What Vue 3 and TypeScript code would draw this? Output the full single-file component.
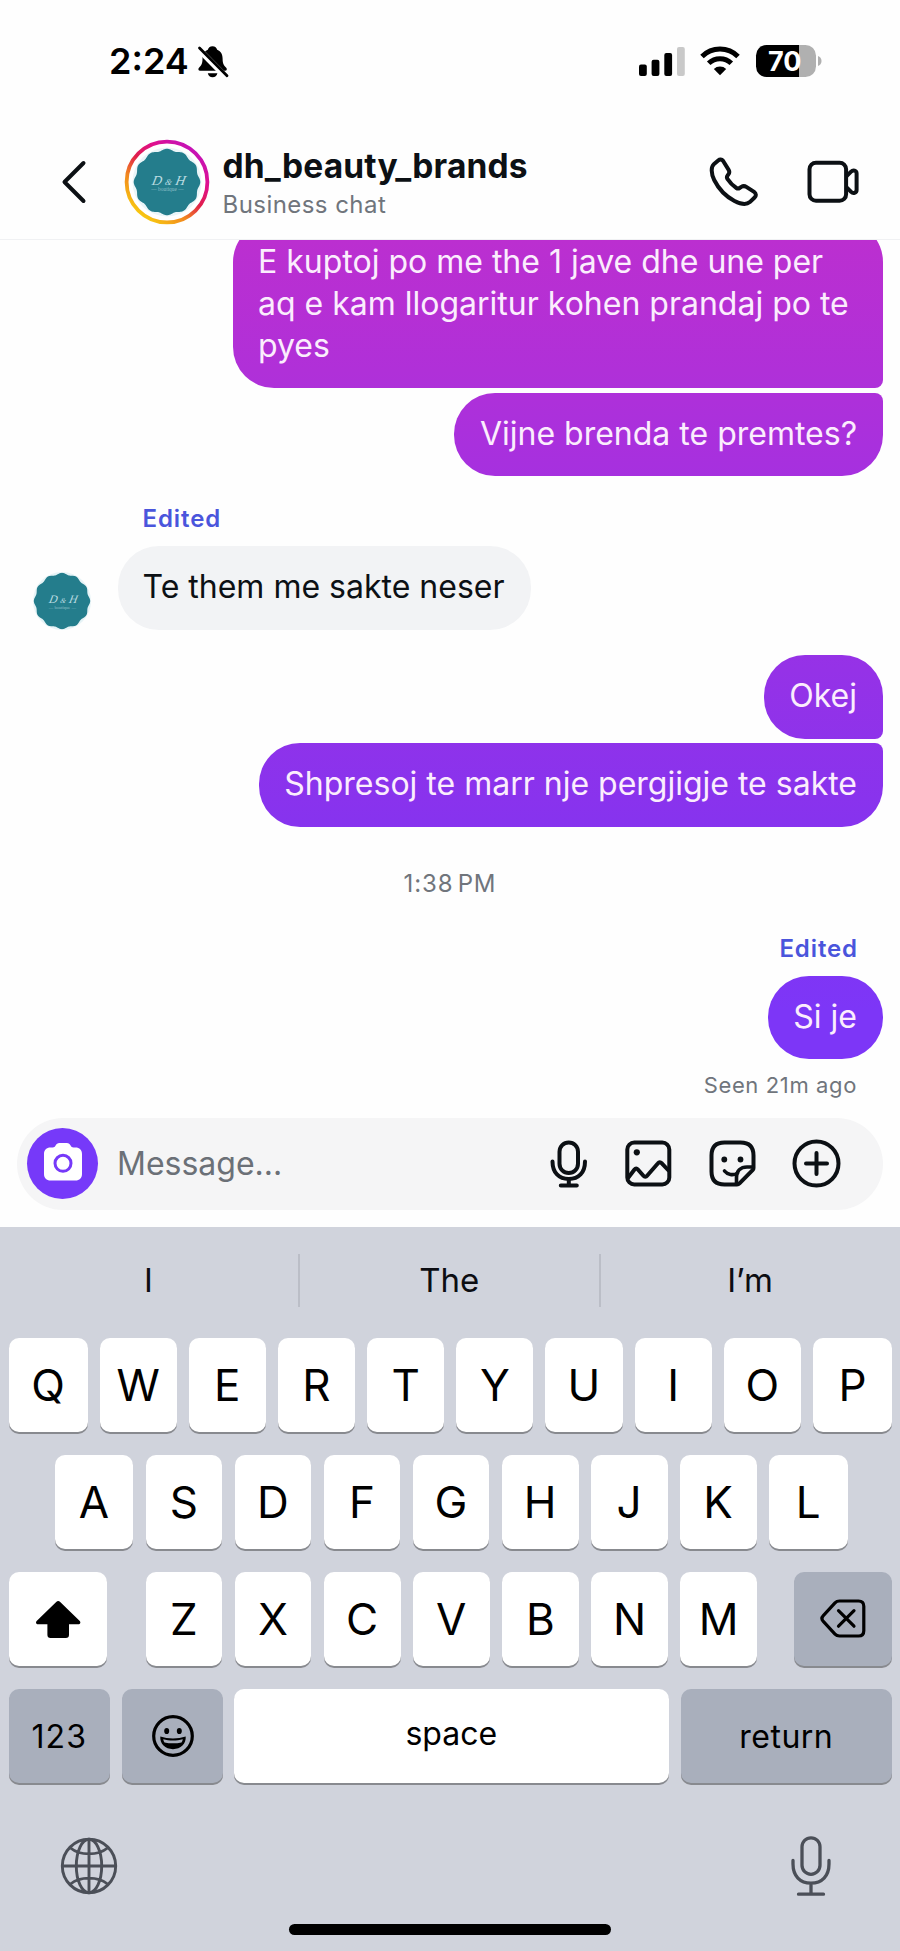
<script setup lang="ts">
interface Key {
  label: string
}

const toKeys = (letters: string): Key[] => [...letters].map((label) => ({ label }))

const topRow = toKeys('QWERTYUIOP')
const homeRow = toKeys('ASDFGHJKL')
const bottomRow = toKeys('ZXCVBNM')
const suggestions: string[] = ['I', 'The', 'I’m']

// Outline of the twelve-lobed seal used as the brand's avatar.
function sealPath(center: number, radius: number, depth: number, lobes: number): string {
  const points: string[] = []
  const steps = 240
  for (let i = 0; i < steps; i++) {
    const angle = (i / steps) * Math.PI * 2
    const r = radius - depth * (0.5 - 0.5 * Math.cos(lobes * angle))
    points.push(`${(center + r * Math.cos(angle)).toFixed(2)} ${(center + r * Math.sin(angle)).toFixed(2)}`)
  }
  return `M${points.join('L')}Z`
}

const seal = sealPath(35, 34, 2, 12)
</script>

<template>
  <div class="phone">
    <div class="status">
      <span class="clock">2:24</span>
      <svg class="bell" width="32" height="34" viewBox="0 0 32 34">
        <path d="M15.500 1.200c-2.600 0-4.200 1.600-4.700 3.500-3.900 1.500-5.300 4.800-5.300 8.800 0 5.500-1.300 7-3.300 9-1.400 1.400-1 3.300 1 3.300h24.800c2 0 2.400-1.900 1-3.300-2-2-3.400-3.500-3.400-9 0-4-1.400-7.300-5.400-8.800-.5-1.900-2.100-3.500-4.700-3.500z" />
        <path d="M10.800 28.200h9.600c-.6 2.600-2.300 4.100-4.800 4.100s-4.200-1.500-4.800-4.100z" />
        <path d="M0 2.500L30 33" stroke="#fff" stroke-width="6" />
        <path d="M2.500 3L30 30.800" stroke="#000" stroke-width="2.800" stroke-linecap="round" />
      </svg>
      <svg class="signal" width="46" height="29" viewBox="0 0 46 29">
        <rect x="0" y="17.500" width="7.800" height="11.500" rx="2" />
        <rect x="12.600" y="12.700" width="7.800" height="16.300" rx="2" />
        <rect x="25.300" y="6" width="7.800" height="23" rx="2" />
        <rect x="38" y="0" width="7.800" height="29" rx="2" fill="#c9c9c9" />
      </svg>
      <svg class="wifi" width="40" height="30" viewBox="0 0 40 30">
        <g fill="none" stroke="#000" stroke-width="5">
          <path d="M2 10.400a25.500 25.500 0 0 1 36 0" />
          <path d="M8.700 17.300a16 16 0 0 1 22.600 0" />
        </g>
        <path d="M20 29.200l-6.200-6.300a9 9 0 0 1 12.400 0z" />
      </svg>
      <div class="battery">
        <div class="cell"><span>70</span></div>
        <svg width="4" height="10" viewBox="0 0 4 10"><path d="M0 0c2 .6 3.500 2.600 3.500 5s-1.500 4.400-3.500 5z" fill="#b0b0b0" /></svg>
      </div>
    </div>

    <header class="header">
      <svg class="back" width="26" height="44" viewBox="0 0 26 44">
        <path d="M22.500 3L3.500 22l19 19" fill="none" stroke="#0c1014" stroke-width="4" stroke-linecap="round" stroke-linejoin="round" />
      </svg>
      <svg class="story" width="86" height="86" viewBox="0 0 86 86">
        <defs>
          <linearGradient id="ring" x1="0.200" y1="0.950" x2="0.850" y2="0.100">
            <stop offset="0" stop-color="#f8cb10" />
            <stop offset="0.300" stop-color="#f1851f" />
            <stop offset="0.520" stop-color="#e01f4a" />
            <stop offset="0.750" stop-color="#e00f8c" />
            <stop offset="1" stop-color="#c413b8" />
          </linearGradient>
        </defs>
        <circle cx="43" cy="43" r="40.400" fill="#fff" stroke="url(#ring)" stroke-width="3.800" />
        <circle cx="43" cy="43" r="34.500" fill="#eaf5f8" />
        <g transform="translate(8.700 8.700) scale(0.980)">
          <path :d="seal" fill="#247d8c" />
          <g transform="skewX(-12)">
            <text x="44" y="38" class="monogram">D <tspan class="amp">&amp;</tspan> H</text>
          </g>
          <text x="35.500" y="44.500" class="tagline">— boutique —</text>
        </g>
      </svg>
      <div class="who">
        <div class="name">dh_beauty_brands</div>
        <div class="sub">Business chat</div>
      </div>
      <svg class="call" width="50" height="50" viewBox="0 0 50 50">
        <path d="M9.200 3.400L4.800 7.200C1.900 9.800 2 16.500 5.200 23 9.300 31.200 17 39.500 25.500 44c6.300 3.300 12.300 3.800 15.300 1.100l4.800-4.600c1.800-1.700 1.600-4.100-.5-5.600l-7.800-5c-1.600-1-3.400-1-5 0l-1.700 1.100c-1 .7-2.200.7-3.200 0-3.800-2.600-6.600-5.600-9-9.200-.7-1.100-.6-2.300.2-3.300l.7-.9c1.300-1.700 1.300-3.300.2-5L14 3.800c-1.300-1.700-3.200-1.800-4.800-.4z" fill="none" stroke="#0c1014" stroke-width="4" stroke-linejoin="round" />
      </svg>
      <svg class="video" width="52" height="46" viewBox="0 0 52 46">
        <g fill="none" stroke="#0c1014" stroke-width="4" stroke-linejoin="round">
          <rect x="2.500" y="3.700" width="36.600" height="38" rx="6.500" />
          <path d="M39.100 17.500l5-4.900c2-2 5.500-1.200 5.500 1.900v16.400c0 3.100-3.500 3.900-5.500 1.900l-5-4.900" />
        </g>
      </svg>
    </header>

    <main class="thread">
      <div class="bubble mine first">E kuptoj po me the 1 jave dhe une per aq e kam llogaritur kohen prandaj po te pyes</div>
      <div class="bubble mine last">Vijne brenda te premtes?</div>

      <div class="edited theirs-label">Edited</div>
      <div class="incoming">
        <svg class="avatar" width="58" height="58" viewBox="0 0 70 70">
          <circle cx="35" cy="35" r="35" fill="#e6f3f6" />
          <path :d="seal" fill="#247d8c" />
          <g transform="skewX(-12)">
            <text x="44" y="38" class="monogram">D <tspan class="amp">&amp;</tspan> H</text>
          </g>
          <text x="35.500" y="44.500" class="tagline">— boutique —</text>
        </svg>
        <div class="bubble theirs">Te them me sakte neser</div>
      </div>

      <div class="bubble mine first okej">Okej</div>
      <div class="bubble mine last">Shpresoj te marr nje pergjigje te sakte</div>

      <div class="time">1:38 PM</div>

      <div class="edited mine-label">Edited</div>
      <div class="bubble mine single">Si je</div>
      <div class="seen">Seen 21m ago</div>
    </main>

    <div class="composer">
      <div class="camera">
        <svg width="40" height="38" viewBox="0 0 40 38">
          <path d="M12.600 2.600C13.400 1 14.500 0 16.400 0h7.400c1.900 0 3 1 3.800 2.600.6 1.300 1.400 1.900 2.900 1.900h2c4 0 6.500 2.500 6.500 6.500v20c0 4-2.500 6.500-6.500 6.500h-25C3.500 37.500 1 35 1 31V11c0-4 2.500-6.500 6.500-6.500h2.200c1.500 0 2.300-.6 2.900-1.900z" fill="#fff" />
          <circle cx="20" cy="20.300" r="8" fill="#fff" stroke="#7639f9" stroke-width="3" />
        </svg>
      </div>
      <span class="placeholder">Message...</span>
      <svg class="tool-mic" width="38" height="48" viewBox="0 0 38 48">
        <g fill="none" stroke="#0c1014" stroke-width="4" stroke-linecap="round">
          <rect x="9.500" y="2.500" width="18.500" height="30.500" rx="9.250" />
          <path d="M2.500 21.500c0 11.200 6.500 17.500 16.300 17.500S35 32.700 35 21.500M18.800 39v6M10.800 45.500h16" />
        </g>
      </svg>
      <svg class="tool-image" width="47" height="47" viewBox="0 0 47 47">
        <rect x="2.300" y="2.500" width="42" height="42" rx="7" fill="none" stroke="#0c1014" stroke-width="4" />
        <path d="M3 38l6.500-8.500c1-1.300 2.300-1.300 3.400 0l5.500 6.300c1.200 1.400 2.600 1.300 3.700-.1L33 23.200c1.100-1.400 2.400-1.400 3.600-.1L44 31" fill="none" stroke="#0c1014" stroke-width="4" stroke-linejoin="round" />
        <circle cx="11.800" cy="12.300" r="3.100" fill="#0c1014" />
      </svg>
      <svg class="tool-sticker" width="47" height="47" viewBox="0 0 47 47">
        <g fill="none" stroke="#0c1014" stroke-width="4" stroke-linecap="round" stroke-linejoin="round">
          <path d="M28 44.500H15.500c-8.500 0-13-4.500-13-13v-16c0-8.500 4.500-13 13-13h16c8.500 0 13 4.500 13 13v12.500c0 1-.3 1.600-.9 2.200L30.500 43.400c-.7.700-1.500 1.100-2.500 1.100z" />
          <path d="M27.500 44v-6.500c0-6.500 4-10.500 10.500-10.500h6" stroke-width="3.600" />
          <path d="M15.500 31c3 3.800 8.500 4.800 13 2.200" stroke-width="3.600" />
        </g>
        <circle cx="15.300" cy="19.500" r="2.900" fill="#0c1014" />
        <circle cx="31.500" cy="19.500" r="2.900" fill="#0c1014" />
      </svg>
      <svg class="tool-plus" width="49" height="49" viewBox="0 0 49 49">
        <g fill="none" stroke="#0c1014" stroke-width="4" stroke-linecap="round">
          <circle cx="24.500" cy="24.500" r="22" />
          <path d="M24.500 14v21M14 24.500h21" />
        </g>
      </svg>
    </div>

    <section class="keyboard">
      <div class="suggestions">
        <div v-for="word in suggestions" :key="word" class="suggestion">{{ word }}</div>
      </div>
      <div class="row full">
        <div v-for="key in topRow" :key="key.label" class="key letter">{{ key.label }}</div>
      </div>
      <div class="row full inset">
        <div v-for="key in homeRow" :key="key.label" class="key letter">{{ key.label }}</div>
      </div>
      <div class="row">
        <div class="key shift">
          <svg width="46" height="40" viewBox="0 0 46 40">
            <path d="M21.200 2c1.300-1.300 2.700-1.300 4 0L44.500 20.800c1.500 1.500 1 3.500-1.300 3.500h-9.200v10.500c0 2.200-1 3.200-3.200 3.200H15.600c-2.200 0-3.200-1-3.200-3.200V24.300H3.200c-2.300 0-2.800-2-1.300-3.500z" />
          </svg>
        </div>
        <div class="letters">
          <div v-for="key in bottomRow" :key="key.label" class="key letter">{{ key.label }}</div>
        </div>
        <div class="key grey delete">
          <svg width="46" height="40" viewBox="0 0 46 40">
            <g fill="none" stroke="#000" stroke-width="3.200" stroke-linecap="round" stroke-linejoin="round">
              <path d="M19.500 2h19c3.600 0 5.300 1.700 5.300 5.300v24.400c0 3.600-1.700 5.300-5.300 5.300h-19c-2 0-3.200-.5-4.500-1.900L3.300 22.400c-1.900-2-1.900-3.800 0-5.800L15 3.900C16.300 2.500 17.500 2 19.500 2z" />
              <path d="M18.500 11.700l15.500 15.500M34 11.700L18.500 27.200" />
            </g>
          </svg>
        </div>
      </div>
      <div class="row">
        <div class="key grey numbers">123</div>
        <div class="key grey emoji">
          <svg width="44" height="44" viewBox="0 0 44 44">
            <circle cx="22" cy="22" r="19.300" fill="none" stroke="#000" stroke-width="3.200" />
            <ellipse cx="15.700" cy="17" rx="2.500" ry="3.100" />
            <ellipse cx="28.300" cy="17" rx="2.500" ry="3.100" />
            <path d="M9.300 22.600c4 1.300 8.200 1.900 12.700 1.900s8.700-.6 12.700-1.900c.6 7.200-5 12.600-12.700 12.600S8.700 29.800 9.300 22.600z" />
            <path d="M12.200 25.300c3.200.9 6.300 1.300 9.800 1.300s6.600-.4 9.800-1.300c-.2 1.200-.6 2.200-1.300 3.100-5.500 1.200-11.500 1.200-17 0-.7-.9-1.100-1.900-1.300-3.100z" fill="#a9afbc" />
          </svg>
        </div>
        <div class="key space">space</div>
        <div class="key grey return">return</div>
      </div>
      <div class="dock">
        <svg class="globe" width="58" height="58" viewBox="0 0 58 58">
          <g fill="none" stroke="#4b4f58" stroke-width="2.900">
            <circle cx="29" cy="29" r="26.700" />
            <ellipse cx="29" cy="29" rx="12.700" ry="26.700" />
            <path d="M29 2.500v53M2.500 29h53M10.500 11c9.500 7.800 27.500 7.800 37 0M10.500 47c9.500-7.800 27.500-7.800 37 0" />
          </g>
        </svg>
        <svg class="dictate" width="40" height="60" viewBox="0 0 40 60">
          <g fill="none" stroke="#4b4f58" stroke-width="3.300" stroke-linecap="round">
            <rect x="11" y="1.800" width="18" height="36.500" rx="9" />
            <path d="M2 24.500v3.500c0 12 7 19.200 18 19.200S38 40 38 28v-3.500M20 47.200v10.300M7.500 58.200h25" />
          </g>
        </svg>
      </div>
      <div class="home"></div>
    </section>
  </div>
</template>

<style>
body {
  margin: 0;
  background: #fff;
}
</style>

<style scoped>
.phone {
  width: 900px;
  height: 1951px;
  display: flex;
  flex-direction: column;
  overflow: hidden;
  background: #fefefe;
  color: #0c1014;
  font-family: Inter, "Liberation Sans", sans-serif;
  font-size: 32px;
}

svg {
  display: block;
  flex: none;
}

.status {
  height: 84px;
  padding: 41px 78px 0 109px;
  display: flex;
  align-items: flex-start;
  color: #000;
}

.clock {
  font-size: 36px;
  font-weight: 600;
  line-height: 40px;
}

.bell {
  margin: 4px auto 0 8px;
}

.signal {
  margin: 6px 15px 0 0;
}

.wifi {
  margin: 4.500px 16px 0 0;
}

.battery {
  display: flex;
  align-items: center;
  gap: 2.500px;
  margin-top: 3.500px;
}

.cell {
  box-sizing: border-box;
  width: 59.500px;
  height: 32px;
  padding-right: 2px;
  border-radius: 10.500px;
  background: linear-gradient(90deg, #000 71%, #b0b0b0 71%);
  color: #fff;
  font-size: 27px;
  font-weight: 700;
  line-height: 33px;
  text-align: center;
}

.header {
  box-sizing: border-box;
  height: 115px;
  padding: 0 41.500px 0 61px;
  display: flex;
  align-items: center;
  border-bottom: 1px solid #f0f1f3;
}

.story {
  margin-left: 37px;
}

.monogram {
  fill: #b9dbe0;
  font: italic 14px "Liberation Serif", serif;
  text-anchor: middle;
}

.amp {
  font-size: 9px;
}

.tagline {
  fill: #8dbfc8;
  font: 5.500px "Liberation Serif", serif;
  text-anchor: middle;
}

.who {
  padding-top: 1.500px;
  margin: 0 auto 0 12.500px;
}

.name {
  font-size: 33.500px;
  font-weight: 700;
  line-height: 40px;
  letter-spacing: 0.150px;
}

.sub {
  margin-top: 3.500px;
  color: #70757c;
  font-size: 24px;
  line-height: 30px;
  letter-spacing: 0.450px;
}

.call {
  margin-right: 48px;
}

.thread {
  height: 878px;
  padding: 0 17px;
  display: flex;
  flex-direction: column;
  align-items: flex-end;
  overflow: hidden;
}

.bubble {
  box-sizing: border-box;
  max-width: 650.500px;
  flex: none;
  padding: 20px 26px 21.500px 25.500px;
  border-radius: 41px;
  line-height: 42px;
}

.mine {
  background: linear-gradient(180deg, #bb2fd0 240px, #b030d8 370px, #a630df 475px, #9532e7 670px, #8733ee 820px, #7d36f7 1010px) fixed;
  color: #fbedfd;
}

.mine.first {
  border-bottom-right-radius: 8px;
}

.mine.last {
  margin-top: 4.500px;
  border-top-right-radius: 8px;
}

.thread > .bubble:first-child {
  margin-top: -19.500px;
}

.edited {
  flex: none;
  color: #4a55dc;
  font-size: 24px;
  font-weight: 600;
  line-height: 30px;
  letter-spacing: 0.900px;
}

.theirs-label {
  align-self: flex-start;
  margin: 27.500px 0 12.500px 125.500px;
}

.incoming {
  align-self: stretch;
  display: flex;
  align-items: flex-end;
  flex: none;
}

.avatar {
  margin: 0 26.500px 0 16px;
}

.theirs {
  padding: 20px 26.500px 21.500px 25px;
  background: #f2f3f5;
}

.okej {
  margin-top: 25.500px;
}

.time {
  align-self: center;
  margin-top: 42px;
  color: #70757c;
  font-size: 24px;
  line-height: 30px;
  letter-spacing: 0.900px;
  word-spacing: -3.500px;
}

.mine-label {
  margin: 35px 25px 12px 0;
}

.seen {
  margin: 11px 26px 0 0;
  color: #70757c;
  font-size: 22px;
  line-height: 30px;
  letter-spacing: 0.620px;
}

.composer {
  box-sizing: border-box;
  height: 92px;
  margin: 0 17px;
  padding: 0 42.500px 1px 10px;
  display: flex;
  align-items: center;
  flex: none;
  border-radius: 46px;
  background: #f5f5f6;
}

.camera {
  width: 71px;
  height: 71px;
  display: flex;
  align-items: center;
  justify-content: center;
  border-radius: 50%;
  background: #7639f9;
}

.camera svg {
  margin-bottom: 4px;
}

.placeholder {
  margin: 0 auto 0 19px;
  color: #6b7077;
}

.tool-mic {
  margin-right: 37px;
}

.tool-image {
  margin-right: 37px;
}

.tool-sticker {
  margin-right: 35.500px;
}

.keyboard {
  box-sizing: border-box;
  height: 724px;
  margin-top: 17px;
  padding: 0 8px 0 8.500px;
  display: flex;
  flex-direction: column;
  gap: 23.200px;
  background: #d0d3dc;
  color: #000;
}

.suggestions {
  box-sizing: border-box;
  height: 110.700px;
  margin: 0 -7.500px -23.200px -9.500px;
  padding-bottom: 4px;
  display: flex;
  align-items: center;
}

.suggestion {
  flex: 1;
  height: 53px;
  color: #0c0d12;
  font-size: 33px;
  line-height: 53px;
  text-align: center;
}

.suggestion + .suggestion {
  border-left: 2px solid #bbbec7;
}

.row {
  height: 94px;
  display: flex;
}

.full {
  gap: 12.100px;
}

.inset {
  padding: 0 44.500px 0 46px;
}

.full .letter {
  flex: 77 1 0;
}

.full .letter:first-child,
.full .letter:last-child {
  flex-grow: 79;
}

.key {
  height: 94px;
  display: flex;
  align-items: center;
  justify-content: center;
  border-radius: 10px;
  background: #fff;
  box-shadow: 0 2px 0 #888a8f;
}

.letter {
  font-size: 44px;
}

.letters {
  width: 611.500px;
  margin: 0 36.500px 0 38.500px;
  display: flex;
  gap: 12.300px;
}

.letters .letter {
  flex: 1;
}

.grey {
  background: #a9afbc;
}

.shift,
.delete {
  width: 98.500px;
}

.shift svg {
  margin-top: 2px;
  margin-left: 1px;
}

.numbers {
  width: 101.500px;
  letter-spacing: 1.100px;
}

.emoji {
  width: 101px;
  margin: 0 10.500px 0 12px;
}

.space {
  box-sizing: border-box;
  width: 435.500px;
  padding-bottom: 6px;
}

.return {
  width: 211.500px;
  margin-left: 11.500px;
  letter-spacing: 0.500px;
}

.dock {
  margin-top: 30px;
  padding: 0 61.500px 0 51.500px;
  display: flex;
  align-items: center;
  justify-content: space-between;
}

.home {
  width: 322px;
  height: 10.500px;
  margin: 4.500px auto 0;
  border-radius: 6px;
  background: #000;
}
</style>
